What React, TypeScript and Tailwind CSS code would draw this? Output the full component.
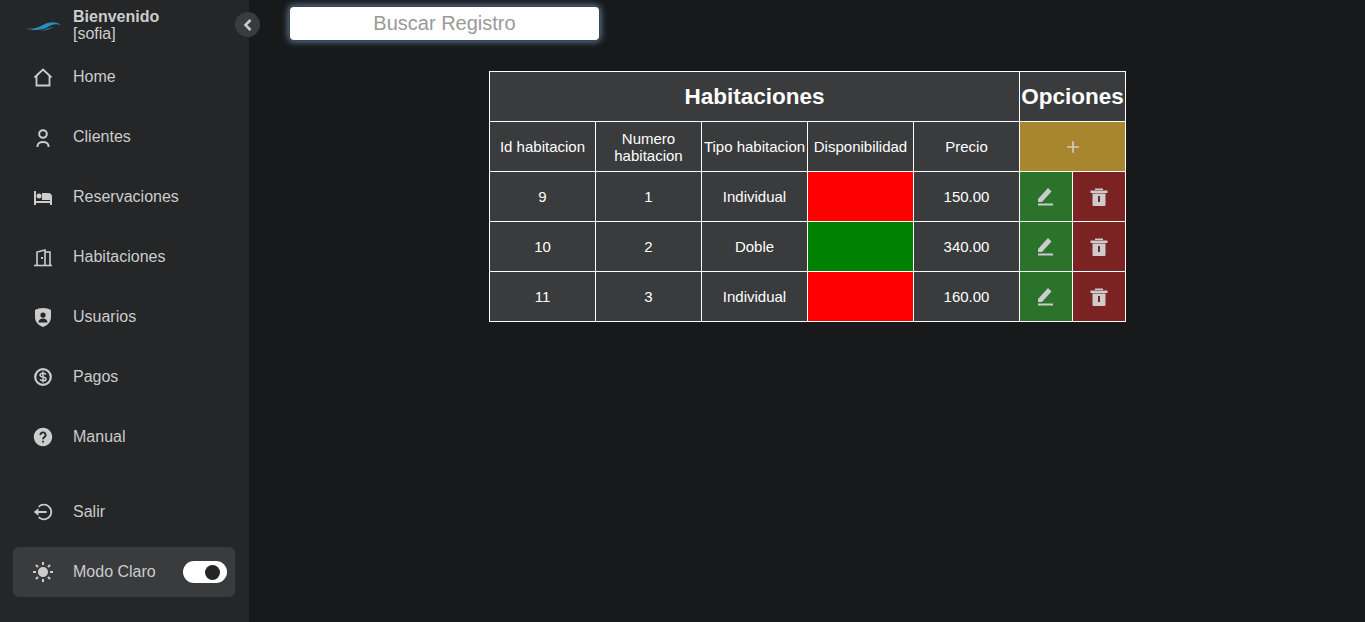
import type { ReactNode } from "react";
import { BiSolidHelpCircle, BiLogOutCircle, BiSolidSun, BiSolidChevronLeft, BiPlus } from "react-icons/bi";

function HomeIcon() {
  return (
    <svg viewBox="0 0 24 24" width="24" height="24" fill="none" stroke="currentColor" strokeWidth="1.800">
      <path d="M3.500 12.500 12 4.500l8.500 8" />
      <path d="M5.500 11v9.500h13V11" />
    </svg>
  );
}

function UserIcon() {
  return (
    <svg viewBox="0 0 24 24" width="24" height="24" fill="none" stroke="currentColor" strokeWidth="2">
      <circle cx="12" cy="9" r="3.800" />
      <path d="M6.500 22v-1a5.500 4 0 0 1 11 0v1" />
    </svg>
  );
}

function BedIcon() {
  return (
    <svg viewBox="0 0 24 24" width="24" height="24" fill="currentColor">
      <rect x="3" y="6" width="2" height="14" />
      <rect x="3" y="16" width="18" height="2" />
      <rect x="19" y="13" width="2" height="7" />
      <circle cx="8" cy="11" r="2.500" />
      <path d="M11 8h6a4 4 0 0 1 4 4v3H11z" />
    </svg>
  );
}

function DoorIcon() {
  return (
    <svg viewBox="0 0 24 24" width="24" height="24" fill="none" stroke="currentColor" strokeWidth="1.600">
      <path d="M3 20.500h18" />
      <path d="M6 20.500V7l8-2v15.500" />
      <path d="M14 7h5v13.500" />
      <rect x="10" y="12" width="2" height="2" fill="currentColor" stroke="none" />
    </svg>
  );
}

function ShieldUser() {
  return (
    <svg viewBox="0 0 24 24" width="24" height="24" fill="currentColor">
      <path
        fillRule="evenodd"
        d="M12 3c3 0 6 .8 8 2v7c0 5-3.500 8.500-8 10-4.500-1.500-8-5-8-10V5c2-1.200 5-2 8-2zm0 4.500a2.600 2.600 0 1 0 0 5.200 2.600 2.600 0 0 0 0-5.200zM7.500 17.500h9c0-2.600-2-4-4.500-4s-4.500 1.400-4.500 4z"
      />
    </svg>
  );
}

function DollarIcon() {
  return (
    <svg viewBox="0 0 24 24" width="24" height="24" fill="none" stroke="currentColor">
      <circle cx="12" cy="12" r="7.800" strokeWidth="2.200" />
      <path d="M15 9.500c-.6-1-1.600-1.300-3-1.300-1.700 0-3 .7-3 1.900 0 2.800 6 1.200 6 3.800 0 1.200-1.300 1.900-3 1.900-1.400 0-2.500-.4-3-1.400M12 6.500v11" strokeWidth="1.500" />
    </svg>
  );
}

function PencilIcon() {
  return (
    <svg viewBox="0 0 24 24" width="24" height="24" fill="currentColor" className="mx-auto">
      <path d="M4 17v-3L14 3l3.500 3.500L8 17z" />
      <rect x="4" y="18.500" width="15" height="2" />
    </svg>
  );
}

function TrashIcon() {
  return (
    <svg viewBox="0 0 24 24" width="24" height="24" fill="currentColor" className="mx-auto">
      <rect x="8" y="3.500" width="8" height="1.500" />
      <rect x="3.500" y="5.500" width="17" height="2.500" />
      <path fillRule="evenodd" d="M5.500 8.500h13V20a1 1 0 0 1-1 1h-11a1 1 0 0 1-1-1zM11 11v6h2v-6z" />
    </svg>
  );
}

const menuItems: { label: string; icon: ReactNode }[] = [
  { label: "Home", icon: <HomeIcon /> },
  { label: "Clientes", icon: <UserIcon /> },
  { label: "Reservaciones", icon: <BedIcon /> },
  { label: "Habitaciones", icon: <DoorIcon /> },
  { label: "Usuarios", icon: <ShieldUser /> },
  { label: "Pagos", icon: <DollarIcon /> },
  { label: "Manual", icon: <BiSolidHelpCircle size={22} /> },
];

const rooms = [
  { id: 9, numero: 1, tipo: "Individual", disponible: false, precio: "150.00" },
  { id: 10, numero: 2, tipo: "Doble", disponible: true, precio: "340.00" },
  { id: 11, numero: 3, tipo: "Individual", disponible: false, precio: "160.00" },
];

function MenuItem({ label, icon }: { label: string; icon: ReactNode }) {
  return (
    <div className="flex h-[60px] items-center text-[#cccccc]">
      <div className="ml-[13px] flex w-[60px] justify-center">{icon}</div>
      <span className="text-base">{label}</span>
    </div>
  );
}

function Sidebar() {
  return (
    <aside className="relative flex h-full w-[249px] shrink-0 flex-col bg-[#242628]">
      <div className="flex h-[46px] items-start">
        <div className="flex w-[73px] justify-center pt-[20px] pl-[15px]">
          <svg viewBox="0 0 38 12" width="38" height="12">
            <path d="M1 8c5 2 11 0 17-3 6-3 12-4 18 0-6-2-10 0-14 2.500C16 10.500 8 11 1 8z" fill="#2a8fc0" />
            <path d="M15 10.500c5-.5 9-3.500 15-3.500-4 1-8 4.500-15 3.500z" fill="#1b6d94" />
          </svg>
        </div>
        <div className="pt-[8px] text-[#cccccc]">
          <div className="text-base leading-[17px] font-bold">Bienvenido</div>
          <div className="text-base leading-[17px]">[sofia]</div>
        </div>
      </div>
      <button className="absolute top-[12px] left-[235px] flex h-[25px] w-[25px] items-center justify-center rounded-full bg-[#3a3b3c] text-[#cccccc]">
        <BiSolidChevronLeft size={20} />
      </button>
      <nav className="pt-[1px]">
        {menuItems.map((item) => (
          <MenuItem key={item.label} label={item.label} icon={item.icon} />
        ))}
      </nav>
      <div className="mt-[15px]">
        <MenuItem label="Salir" icon={<BiLogOutCircle size={22} />} />
      </div>
      <div className="mx-[13px] mt-[5px] flex h-[50px] w-[222px] items-center rounded-md bg-[#3a3b3c] text-[#cccccc]">
        <div className="flex w-[60px] justify-center">
          <BiSolidSun size={24} />
        </div>
        <span className="text-base">Modo Claro</span>
        <div className="mr-[8px] ml-auto flex h-[22px] w-[44px] items-center justify-end rounded-full bg-white pr-[7px]">
          <div className="h-[15px] w-[15px] rounded-full bg-[#242526]" />
        </div>
      </div>
    </aside>
  );
}

function RoomsTable() {
  const cell = "border border-white text-center align-middle";
  return (
    <table className="w-[636px] table-fixed border-collapse bg-[#3a3b3c] text-[15px] leading-[17px] text-white">
      <colgroup>
        <col className="w-[106px]" />
        <col className="w-[106px]" />
        <col className="w-[106px]" />
        <col className="w-[106px]" />
        <col className="w-[106px]" />
        <col className="w-[53px]" />
        <col className="w-[53px]" />
      </colgroup>
      <thead>
        <tr className="h-[50px]">
          <th colSpan={5} className={`${cell} text-[22.500px] font-bold`}>Habitaciones</th>
          <th colSpan={2} className={`${cell} text-[22.500px] font-bold`}>Opciones</th>
        </tr>
        <tr className="h-[50px]">
          <td className={cell}>Id habitacion</td>
          <td className={cell}>Numero habitacion</td>
          <td className={`${cell} whitespace-nowrap`}>Tipo habitacion</td>
          <td className={cell}>Disponibilidad</td>
          <td className={cell}>Precio</td>
          <td colSpan={2} className={`${cell} bg-[#a8862d]`}>
            <BiPlus size={20} className="mx-auto text-[#cccccc]" />
          </td>
        </tr>
      </thead>
      <tbody>
        {rooms.map((room) => (
          <tr key={room.id} className="h-[50px]">
            <td className={cell}>{room.id}</td>
            <td className={cell}>{room.numero}</td>
            <td className={cell}>{room.tipo}</td>
            <td className={`${cell} ${room.disponible ? "bg-[#008000]" : "bg-[#ff0000]"}`} />
            <td className={cell}>{room.precio}</td>
            <td className={`${cell} bg-[#2b722b] text-[#cccccc]`}>
              <PencilIcon />
            </td>
            <td className={`${cell} bg-[#7b2222] text-[#cccccc]`}>
              <TrashIcon />
            </td>
          </tr>
        ))}
      </tbody>
    </table>
  );
}

export default function App() {
  return (
    <div className="flex h-[622px] overflow-hidden bg-[#18191b] font-['Liberation_Sans',Arial,sans-serif]">
      <Sidebar />
      <main className="flex-1">
        <div className="pt-[7px] pl-[41px]">
          <input
            placeholder="Buscar Registro"
            className="block h-[33px] w-[309px] rounded-[4px] bg-white text-center text-xl text-black shadow-[0_0_0_1px_#3c4650,0_0_6px_2px_#5f7a95] outline-none placeholder:text-[#999999]"
          />
        </div>
        <div className="mt-[31px] flex justify-center pl-[1px]">
          <RoomsTable />
        </div>
      </main>
    </div>
  );
}
